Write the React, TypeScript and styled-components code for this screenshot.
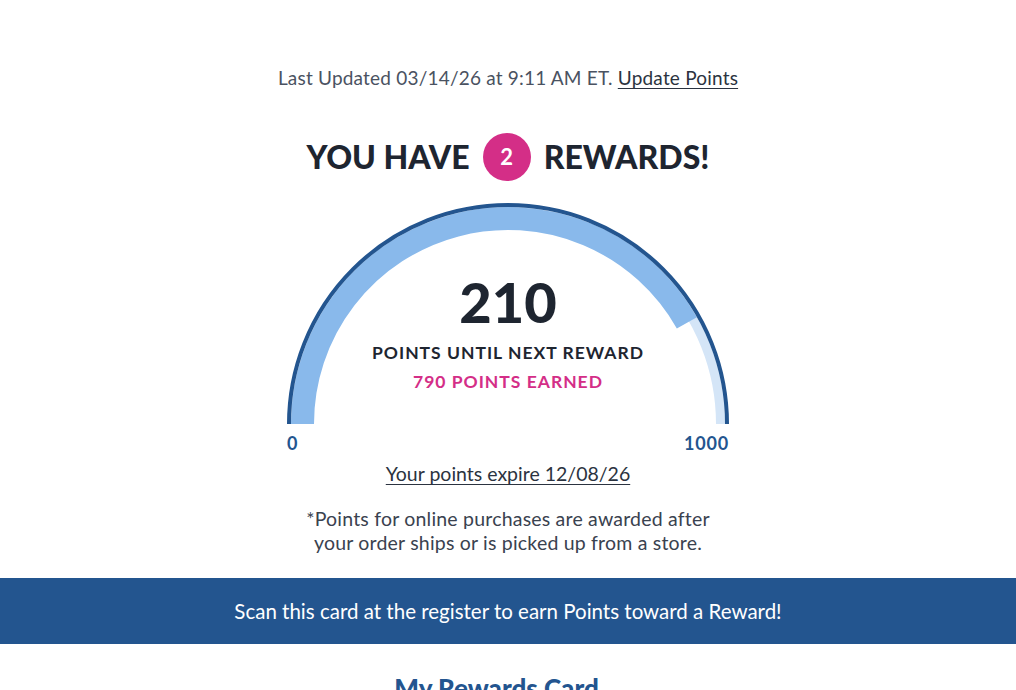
import React from 'react';
import styled, { createGlobalStyle } from 'styled-components';

const GlobalStyle = createGlobalStyle`
  body {
    margin: 0;
    background: #fff;
    font-family: Lato, "Noto Sans", sans-serif;
    color: #1e2530;
    overflow: hidden;
  }
`;

const Page = styled.main`
  display: flex;
  flex-direction: column;
  align-items: center;
  padding-top: 66px;
`;

const Updated = styled.p`
  margin: 0;
  font-size: 19px;
  line-height: 24px;
  letter-spacing: 0.2px;
  color: #4a5261;
`;

const TextLink = styled.a`
  color: #2b3340;
  text-decoration: underline;
  text-underline-offset: 3px;
  cursor: pointer;
`;

const Heading = styled.h1`
  margin: 43px 0 0;
  display: flex;
  align-items: center;
  gap: 13px;
  font-size: 32px;
  line-height: 48px;
  font-weight: 900;
  color: #1e2530;
`;

const CountBadge = styled.span`
  width: 48px;
  height: 48px;
  border-radius: 50%;
  background: #d42e87;
  color: #fff;
  font-size: 22px;
  font-weight: 700;
  display: flex;
  align-items: center;
  justify-content: center;
`;

const GaugeBox = styled.div`
  position: relative;
  width: 442px;
  height: 222px;
  margin-top: 22px;
`;

const GaugeArt = styled.svg`
  position: absolute;
  inset: 0;
`;

const GaugeText = styled.div`
  position: relative;
  display: flex;
  flex-direction: column;
  align-items: center;
  padding-top: 67px;
`;

const BigNumber = styled.div`
  font-size: 56px;
  line-height: 64px;
  font-weight: 900;
  color: #1e2530;
`;

const GaugeLabel = styled.div<{ $pink?: boolean }>`
  margin-top: ${p => (p.$pink ? '0' : '4px')};
  font-size: 17.5px;
  line-height: 29px;
  font-weight: 700;
  letter-spacing: 1px;
  color: ${p => (p.$pink ? '#d42e87' : '#1e2530')};
`;

const Scale = styled.div`
  width: 442px;
  display: flex;
  justify-content: space-between;
  margin-top: 8px;
  font-size: 18px;
  line-height: 20px;
  font-weight: 700;
  letter-spacing: 0.8px;
  color: #23558f;
`;

const Expire = styled(TextLink)`
  margin-top: 9px;
  font-size: 19.5px;
  line-height: 24px;
`;

const Note = styled.p`
  margin: 21px 0 0;
  font-size: 19.5px;
  line-height: 24px;
  letter-spacing: 0.2px;
  text-align: center;
  color: #3a424f;
`;

const Banner = styled.div`
  align-self: stretch;
  margin-top: 23px;
  height: 66px;
  background: #23558f;
  color: #fff;
  font-size: 20.5px;
  display: flex;
  align-items: center;
  justify-content: center;
`;

const CardSection = styled.section`
  align-self: stretch;
  display: flex;
  justify-content: center;
  padding: 0 23px 0 0;
`;

const CardTitle = styled.h2`
  margin: 28px 0 0;
  font-size: 26px;
  line-height: 32px;
  font-weight: 900;
  color: #23558f;
`;

const R = 221;
// visual sweep of the earned band, in degrees from the left end
const earnedSweep = 150.5;

const arcPoint = (r: number, deg: number) => {
  const a = (deg * Math.PI) / 180;
  return `${(R - r * Math.cos(a)).toFixed(2)} ${(R - r * Math.sin(a)).toFixed(2)}`;
};

const arc = (r: number, from: number, to: number) =>
  `M ${arcPoint(r, from)} A ${r} ${r} 0 0 1 ${arcPoint(r, to)}`;

const Gauge: React.FC = () => (
  <GaugeBox>
    <GaugeArt width="442" height="222" viewBox="0 0 442 222">
      <path d={arc(212.5, 0, 180)} fill="none" stroke="#d4e5f7" strokeWidth="9" />
      <path d={arc(205.5, 0, earnedSweep)} fill="none" stroke="#89b9eb" strokeWidth="23" />
      <path d={arc(219, 0, 180)} fill="none" stroke="#23558f" strokeWidth="4" />
    </GaugeArt>
    <GaugeText>
      <BigNumber>210</BigNumber>
      <GaugeLabel>POINTS UNTIL NEXT REWARD</GaugeLabel>
      <GaugeLabel $pink>790 POINTS EARNED</GaugeLabel>
    </GaugeText>
  </GaugeBox>
);

const App: React.FC = () => (
  <>
    <GlobalStyle />
    <Page>
      <Updated>
        Last Updated 03/14/26 at 9:11 AM ET. <TextLink>Update Points</TextLink>
      </Updated>
      <Heading>
        YOU HAVE <CountBadge>2</CountBadge> REWARDS!
      </Heading>
      <Gauge />
      <Scale>
        <span>0</span>
        <span>1000</span>
      </Scale>
      <Expire>Your points expire 12/08/26</Expire>
      <Note>
        *Points for online purchases are awarded after
        <br />
        your order ships or is picked up from a store.
      </Note>
      <Banner>Scan this card at the register to earn Points toward a Reward!</Banner>
      <CardSection>
        <CardTitle>My Rewards Card</CardTitle>
      </CardSection>
    </Page>
  </>
);

export default App;
